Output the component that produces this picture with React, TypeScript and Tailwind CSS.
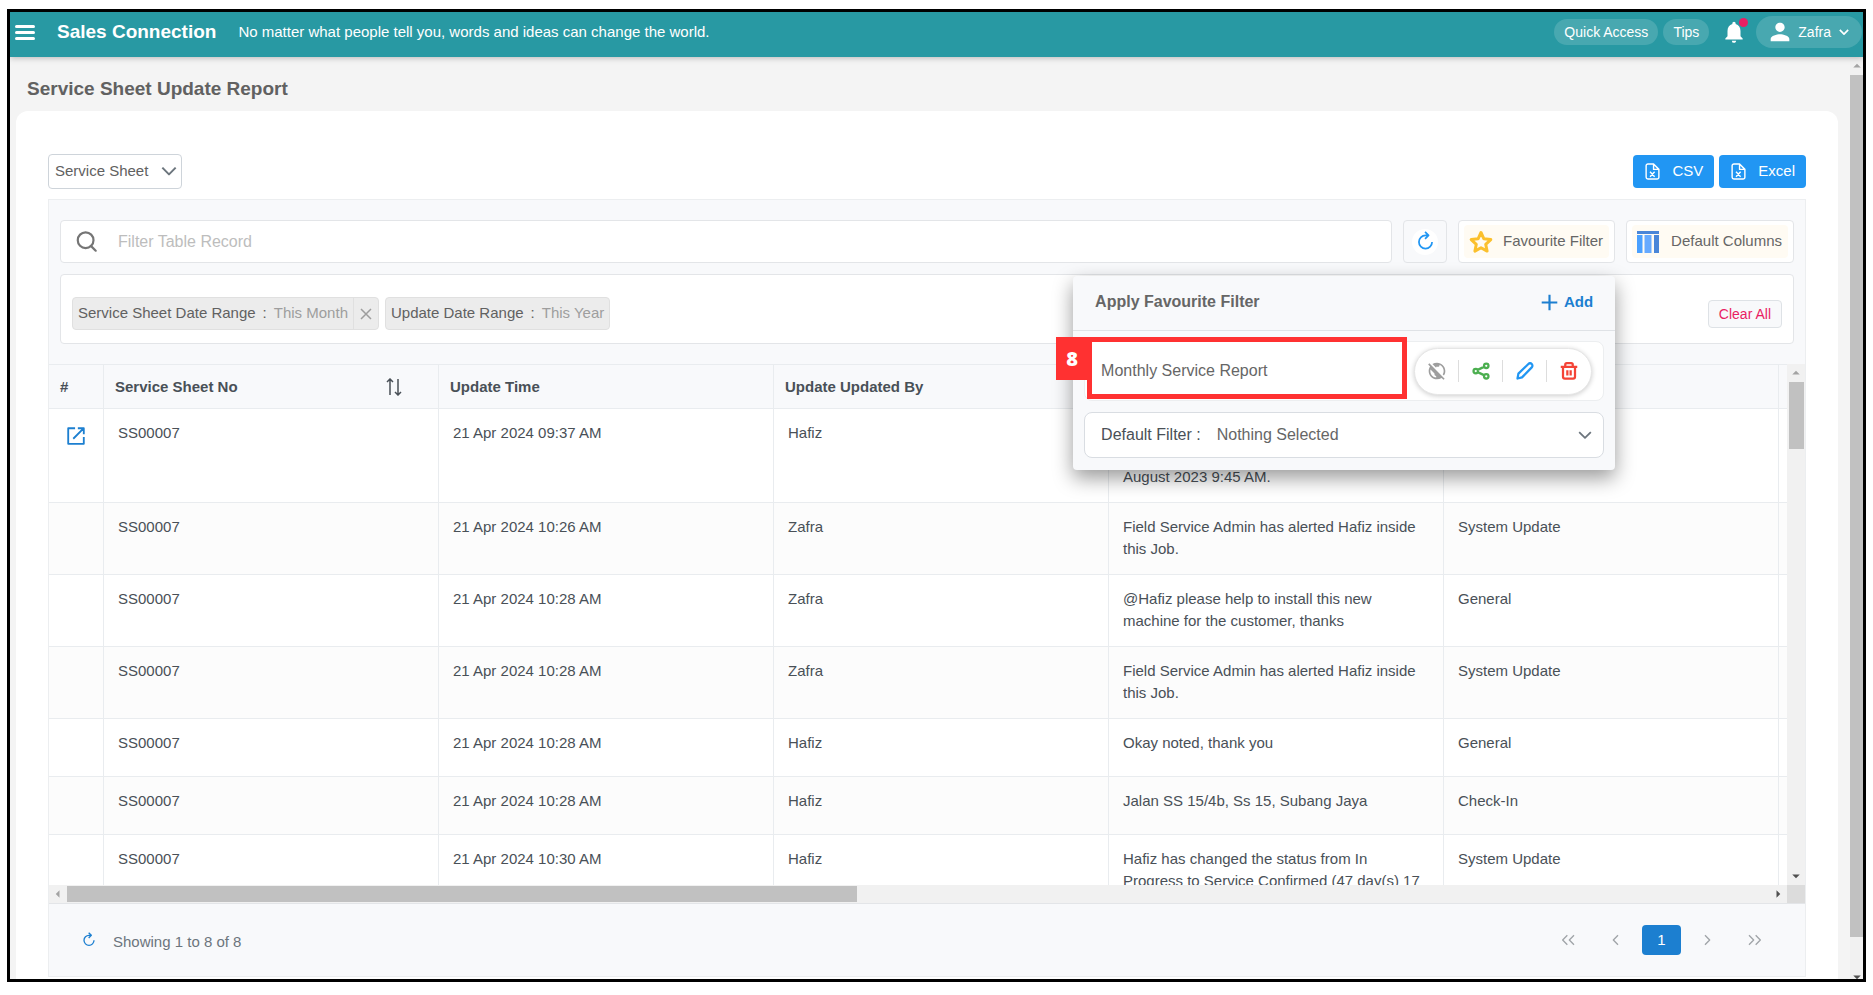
import React from "react";
import { clsx } from "clsx";
import { MdArrowDropDown, MdNotifications, MdPerson, MdPublicOff } from "react-icons/md";

type Row = {
    no: string
    time: string
    by: string
    message: string
    type: string
    link?: boolean
}

const rows: Row[] = [
    { no: "SS00007", time: "21 Apr 2024 09:37 AM", by: "Hafiz", message: "\n\nAugust 2023 9:45 AM.", type: "", link: true },
    { no: "SS00007", time: "21 Apr 2024 10:26 AM", by: "Zafra", message: "Field Service Admin has alerted Hafiz inside this Job.", type: "System Update" },
    { no: "SS00007", time: "21 Apr 2024 10:28 AM", by: "Zafra", message: "@Hafiz please help to install this new machine for the customer, thanks", type: "General" },
    { no: "SS00007", time: "21 Apr 2024 10:28 AM", by: "Zafra", message: "Field Service Admin has alerted Hafiz inside this Job.", type: "System Update" },
    { no: "SS00007", time: "21 Apr 2024 10:28 AM", by: "Hafiz", message: "Okay noted, thank you", type: "General" },
    { no: "SS00007", time: "21 Apr 2024 10:28 AM", by: "Hafiz", message: "Jalan SS 15/4b, Ss 15, Subang Jaya", type: "Check-In" },
    { no: "SS00007", time: "21 Apr 2024 10:30 AM", by: "Hafiz", message: "Hafiz has changed the status from In Progress to Service Confirmed (47 day(s) 17", type: "System Update" },
];

type IconProps = { className?: string; d: string; width?: number }

function LineIcon({ className, d, width = 2 }: IconProps) {
    return (
        <svg viewBox="0 0 24 24" fill="none" stroke="currentColor" strokeWidth={width} strokeLinejoin="round" className={className} aria-hidden="true">
            <path d={d} />
        </svg>
    );
}

const icons = {
    chevron: "M2 7l10 10L22 7",
    refresh: "M19.5 12.5a7.5 7.5 0 1 1-7.5-7.5h3M11.5 1l4 4-4 4",
    open: "M11 3.5H3.5v17h17V13M14 3.5h6.5V10M20.5 3.5L9 15",
    star: "M12 2.5l2.9 6.3 6.9.8-5.1 4.7 1.4 6.8-6.1-3.4-6.1 3.4 1.4-6.8-5.1-4.7 6.900-.8z",
    share: "M8 12a3 3 0 1 1-6 0 3 3 0 1 1 6 0M22 5a3 3 0 1 1-6 0 3 3 0 1 1 6 0M22 19a3 3 0 1 1-6 0 3 3 0 1 1 6 0M7.500 10.500l8.500-4M7.500 13.500l8.500 4",
    pencil: "M2 22l1.2-6.5L16.5 2.700a3 3 0 0 1 4.500 4.500L8 20.500z",
    trash: "M1 6.500h22M4 6.500v13a2.500 2.500 0 0 0 2.500 2.500h11a2.500 2.500 0 0 0 2.500-2.500v-13M7 6.500v-3a2 2 0 0 1 2-2h6a2 2 0 0 1 2 2v3M9.800 11v7M14.200 11v7",
    file: "M13.500 1.500H5.500A2.500 2.500 0 0 0 3 4v16a2.500 2.500 0 0 0 2.500 2.500h13A2.500 2.500 0 0 0 21 20V9zM13.500 1.500V9H21M8.500 12.500l6.500 7M15 12.500l-6.500 7",
    prev: "M15 5l-7 7 7 7",
    next: "M9 5l7 7-7 7",
    first: "M11 5l-7 7 7 7M21 5l-7 7 7 7",
    last: "M3 5l7 7-7 7M13 5l7 7-7 7",
};

function Header() {
    return (
        <header className="relative z-10 flex h-[45px] shrink-0 items-center bg-[#2899a3] pr-[1px] pb-[5px] pl-[5px] text-white shadow-[0_1px_6px_rgba(0,0,0,0.25)]">
            <button type="button" aria-label="Menu" className="flex w-5 flex-col gap-[3px]">
                <span className="h-[3px] w-full rounded-sm bg-white" />
                <span className="h-[3px] w-full rounded-sm bg-white" />
                <span className="h-[3px] w-full rounded-sm bg-white" />
            </button>
            <span className="ml-[22px] text-[19px] font-bold">Sales Connection</span>
            <span className="ml-[22px] text-[15px]">No matter what people tell you, words and ideas can change the world.</span>
            <div className="ml-auto flex items-center">
                <button type="button" className="h-[26px] rounded-full bg-white/15 px-[10px] text-sm">Quick Access</button>
                <button type="button" className="ml-[5px] h-[26px] rounded-full bg-white/15 px-[10px] text-sm">Tips</button>
                <button type="button" aria-label="Notifications" className="relative ml-3">
                    <MdNotifications className="size-[26px]" />
                    <span className="absolute top-[-1px] right-[-1px] size-[9px] rounded-full bg-[#e91e63]" />
                </button>
                <button type="button" className="ml-[9px] flex h-8 items-center rounded-full bg-white/15 pr-[13px] pl-[10px] text-sm">
                    <MdPerson className="size-7" />
                    <span className="ml-1">Zafra</span>
                    <LineIcon d={icons.chevron} width={4} className="ml-2 size-[10px]" />
                </button>
            </div>
        </header>
    );
}

function FavouritePanel() {
    const action = "flex h-[22px] w-11 items-center justify-center";

    return (
        <div className="absolute top-[56px] right-0 z-20 w-[542px] rounded-sm bg-[#f8f9fb] shadow-[0_8px_20px_rgba(0,0,0,0.4)]">
            <div className="flex h-[55px] items-center justify-between border-b border-[#dfe2e6] px-[22px] pb-[2px] font-bold">
                <h2 className="text-[16px] text-[#666]">Apply Favourite Filter</h2>
                <button type="button" className="flex items-center gap-[6px] text-[15px] text-[#1c7fd0]">
                    <LineIcon d="M12 1v22M1 12h22" width={3} className="size-[17px]" />
                    Add
                </button>
            </div>
            <div className="flex flex-col gap-[11px] px-[11px] pt-[10px] pb-3 text-[16px] text-[#666]">
                <div className="relative flex h-[60px] items-center justify-between rounded-lg border border-[#eceef0] bg-white pr-[11px] pl-4">
                    <span>Monthly Service Report</span>
                    <div className="flex h-[47px] items-center divide-x divide-[#ddd] rounded-full border border-[#e6e6e6] bg-white shadow-[0_1px_5px_rgba(0,0,0,0.2)]">
                        <button type="button" aria-label="Make private" className={clsx(action, "text-[#9e9e9e]")}><MdPublicOff className="size-5" /></button>
                        <button type="button" aria-label="Share" className={clsx(action, "text-[#4caf50]")}><LineIcon d={icons.share} width={3} className="size-[18px]" /></button>
                        <button type="button" aria-label="Edit" className={clsx(action, "text-[#2196f3]")}><LineIcon d={icons.pencil} width={3} className="size-[18px]" /></button>
                        <button type="button" aria-label="Delete" className={clsx(action, "text-[#f44336]")}><LineIcon d={icons.trash} width={3} className="size-[18px]" /></button>
                    </div>
                    <div className="pointer-events-none absolute top-[-5px] left-[2px] h-[62px] w-[320px] border-[5px] border-[#ff3131]">
                        <span className="absolute top-[-5px] right-[314px] flex h-[43px] w-8 items-center justify-center bg-[#ff3131] font-['Open_Sans',sans-serif] text-[20px] font-extrabold text-white">8</span>
                    </div>
                </div>
                <div className="relative flex h-[46px] items-center rounded-lg border border-[#d9dde2] bg-white pl-4 text-[#495057]">
                    <label htmlFor="default-filter">Default Filter :</label>
                    <select id="default-filter" className="h-full flex-1 appearance-none rounded-lg pl-4 text-[#666] outline-none">
                        <option>Nothing Selected</option>
                    </select>
                    <LineIcon d={icons.chevron} width={3} className="pointer-events-none absolute right-[11px] size-[14px] text-[#6c757d]" />
                </div>
            </div>
        </div>
    );
}

function Toolbar() {
    const box = "flex h-[43px] items-center rounded-sm border border-[#e3e5e8]";
    const tinted = "flex h-[33px] items-center rounded-sm bg-[#fffbf3] pr-[6px] pl-[5px] text-[15px] text-[#666]";

    return (
        <div className="flex gap-[11px]">
            <div className={clsx(box, "flex-1 bg-white pl-[15px]")}>
                <svg viewBox="0 0 24 24" fill="none" stroke="#757575" strokeWidth="2.5" className="size-[21px]" aria-hidden="true">
                    <circle cx="11" cy="10.5" r="9" />
                    <path d="M17 17l5.500 5.500" strokeLinecap="round" />
                </svg>
                <input aria-label="Filter Table Record" placeholder="Filter Table Record" className="h-full flex-1 px-[21px] text-[16px] outline-none placeholder:text-[#bdbdbd]" />
            </div>
            <button type="button" aria-label="Refresh" className={clsx(box, "w-11 justify-center")}>
                <span className="flex size-[26px] items-center justify-center rounded-full bg-white text-[#2196f3]">
                    <LineIcon d={icons.refresh} width={2} className="size-[21px]" />
                </span>
            </button>
            <div className="relative">
                <button type="button" className={clsx(box, "bg-white px-[5px]")}>
                    <span className={tinted}>
                        <LineIcon d={icons.star} width={3} className="mr-[10px] size-6 text-[#fbc02d]" />
                        Favourite Filter
                    </span>
                </button>
                <FavouritePanel />
            </div>
            <button type="button" className={clsx(box, "bg-white px-[5px]")}>
                <span className={tinted}>
                    <svg viewBox="0 0 22 22" className="mr-3 size-[22px]" aria-hidden="true">
                        <path fill="#4a86d8" d="M0 0h22v3H0zM17 4h5v18h-5z" />
                        <path fill="#4aa0ff" d="M0 4h5.500v18H0z" />
                        <path fill="#66aaff" d="M7.500 4h7v18h-7z" />
                    </svg>
                    Default Columns
                </span>
            </button>
        </div>
    );
}

type ChipProps = { label: string; value: string; removable?: boolean }

function FilterChip({ label, value, removable }: ChipProps) {
    return (
        <div className="flex h-[33px] items-center rounded-sm border border-[#e0e0e0] bg-[#ececec] text-[#9e9e9e]">
            <span className="flex gap-[7px] px-[5px]">
                <span className="text-[#616161]">{label}</span>
                <span className="text-[#616161]">:</span>
                <span>{value}</span>
            </span>
            {removable && (
                <button type="button" aria-label="Remove" className="flex h-full w-[25px] items-center justify-center border-l border-[#e0e0e0]">
                    <LineIcon d="M2 2l20 20M22 2L2 22" width={3} className="size-3" />
                </button>
            )}
        </div>
    );
}

function ActiveFilters() {
    return (
        <div className="mt-[11px] flex h-[70px] items-center gap-[6px] rounded-sm border border-[#e3e5e8] bg-white px-[11px] pt-[9px] text-[15px]">
            <FilterChip label="Service Sheet Date Range" value="This Month" removable />
            <FilterChip label="Update Date Range" value="This Year" />
            <button type="button" className="ml-auto h-7 rounded-sm border border-[#dee2e6] bg-[#f8f9fb] px-[10px] text-sm text-[#e91e63]">Clear All</button>
        </div>
    );
}

function ReportTable() {
    const th = "h-[45px] border-y border-r border-[#e9ecef] bg-[#f8f9fb] pl-[11px] text-left font-bold";
    const td = "h-[58px] border-r border-b border-[#e9ecef] px-[14px] pt-[13px] pb-[14px] align-top";

    return (
        <div className="flex min-h-0 flex-1 flex-col">
            <div className="flex min-h-0 flex-1">
                <div className="min-w-0 flex-1 overflow-hidden bg-white">
                    <table className="w-full table-fixed border-separate border-spacing-0 text-[15px] leading-[22px] text-[#495057]">
                        <colgroup>
                            <col className="w-[55px]" />
                            <col />
                            <col />
                            <col />
                            <col />
                            <col />
                            <col className="w-2" />
                        </colgroup>
                        <thead>
                            <tr>
                                <th className={th}>#</th>
                                <th className={th}>
                                    <span className="flex items-center justify-between pr-[35px]">
                                        Service Sheet No
                                        <svg viewBox="0 0 18 18" fill="none" stroke="currentColor" strokeWidth="1.5" className="size-[18px]" aria-hidden="true">
                                            <path d="M5 17V1M2 4L5 1l3 3M13 1v16M10 14l3 3 3-3" />
                                        </svg>
                                    </span>
                                </th>
                                <th className={th}>Update Time</th>
                                <th className={th}>Update Updated By</th>
                                <th className={th} />
                                <th className={th} />
                                <th className="border-y border-[#e9ecef] bg-[#f8f9fb]" />
                            </tr>
                        </thead>
                        <tbody>
                            {rows.map((row, i) => (
                                <tr key={i} className="even:bg-[#fcfcfc]">
                                    <td className="border-r border-b border-[#e9ecef] pt-4 pl-4 align-top">
                                        {row.link && (
                                            <a href="#open" aria-label="Open service sheet" className="block w-[22px] text-[#1c7fd0]">
                                                <LineIcon d={icons.open} width={2} className="size-[22px]" />
                                            </a>
                                        )}
                                    </td>
                                    <td className={td}>{row.no}</td>
                                    <td className={td}>{row.time}</td>
                                    <td className={td}>{row.by}</td>
                                    <td className={clsx(td, "whitespace-pre-line")}>{row.message}</td>
                                    <td className={td}>{row.type}</td>
                                    <td className="border-b border-[#e9ecef]" />
                                </tr>
                            ))}
                        </tbody>
                    </table>
                </div>
                <div className="flex w-[18px] flex-col items-center bg-[#f1f1f1]">
                    <MdArrowDropDown className="size-[18px] rotate-180 text-[#a3a3a3]" />
                    <div className="h-[67px] w-[15px] bg-[#c1c1c1]" />
                    <MdArrowDropDown className="mt-auto size-[18px] text-[#505050]" />
                </div>
            </div>
            <div className="flex h-[18px] items-center bg-[#f1f1f1]">
                <MdArrowDropDown className="size-[18px] rotate-90 text-[#a3a3a3]" />
                <div className="h-4 w-[45%] bg-[#c1c1c1]" />
                <MdArrowDropDown className="ml-auto size-[18px] -rotate-90 text-[#505050]" />
                <div className="h-full w-[18px] bg-[#dcdcdc]" />
            </div>
        </div>
    );
}

function Pager() {
    const arrow = "flex h-[30px] w-11 items-center justify-center text-[#a0a4a8]";

    return (
        <div className="flex h-[73px] items-center border-t border-[#e3e5e8] pr-7 pl-8 text-[15px] text-[#6c757d]">
            <button type="button" aria-label="Reload" className="text-[#1c7fd0]"><LineIcon d={icons.refresh} width={2} className="size-4" /></button>
            <span className="mt-1 ml-4">Showing 1 to 8 of 8</span>
            <nav className="ml-auto flex items-center gap-1">
                <button type="button" aria-label="First page" className={arrow}><LineIcon d={icons.first} width={2} className="size-4" /></button>
                <button type="button" aria-label="Previous page" className={arrow}><LineIcon d={icons.prev} width={2} className="size-4" /></button>
                <button type="button" className="h-[30px] w-[39px] rounded-sm bg-[#1c7fd0] text-white">1</button>
                <button type="button" aria-label="Next page" className={arrow}><LineIcon d={icons.next} width={2} className="size-4" /></button>
                <button type="button" aria-label="Last page" className={arrow}><LineIcon d={icons.last} width={2} className="size-4" /></button>
            </nav>
        </div>
    );
}

export default function App() {
    const exportButton = "flex h-[33px] items-center gap-[11px] rounded-sm bg-[#2196f3] px-[11px] text-[15px] text-white";

    return (
        <div className="h-screen bg-white px-[7px] pt-[9px] pb-[13px] font-['Liberation_Sans',Arial,sans-serif]">
            <div className="flex h-full flex-col overflow-hidden border-[3px] border-black bg-[#f4f4f4]">
                <Header />
                <div className="flex min-h-0 flex-1">
                    <main className="flex min-w-0 flex-1 flex-col pr-3 pl-[6px]">
                        <h1 className="flex h-[54px] items-center pt-[10px] pl-[11px] text-[19px] font-bold text-[#616161]">Service Sheet Update Report</h1>
                        <div className="flex min-h-0 flex-1 flex-col rounded-t-xl bg-white px-8 pt-[43px] pb-[2px]">
                            <div className="flex items-center justify-between">
                                <div className="relative">
                                    <select aria-label="Report type" className="h-[35px] w-[134px] appearance-none rounded-sm border border-[#ced4da] bg-white pl-[6px] text-[15px] text-[#616161]">
                                        <option>Service Sheet</option>
                                    </select>
                                    <LineIcon d={icons.chevron} width={3} className="pointer-events-none absolute top-[9px] right-[5px] size-4 text-[#6c757d]" />
                                </div>
                                <div className="flex gap-[5px]">
                                    <button type="button" className={exportButton}><LineIcon d={icons.file} className="size-[17px]" />CSV</button>
                                    <button type="button" className={exportButton}><LineIcon d={icons.file} className="size-[17px]" />Excel</button>
                                </div>
                            </div>
                            <section className="mt-[10px] flex min-h-0 flex-1 flex-col border border-[#eceef0] bg-[#f8f9fb]">
                                <div className="px-[11px] py-5">
                                    <Toolbar />
                                    <ActiveFilters />
                                </div>
                                <ReportTable />
                                <Pager />
                            </section>
                        </div>
                    </main>
                    <div className="flex w-[13px] flex-col items-center overflow-hidden bg-[#f1f1f1]">
                        <MdArrowDropDown className="size-[18px] shrink-0 rotate-180 text-[#a3a3a3]" />
                        <div className="w-full flex-1 bg-[#c1c1c1]" />
                        <MdArrowDropDown className="mt-[31px] mb-[-7px] size-[18px] shrink-0 text-[#505050]" />
                    </div>
                </div>
            </div>
        </div>
    );
}
